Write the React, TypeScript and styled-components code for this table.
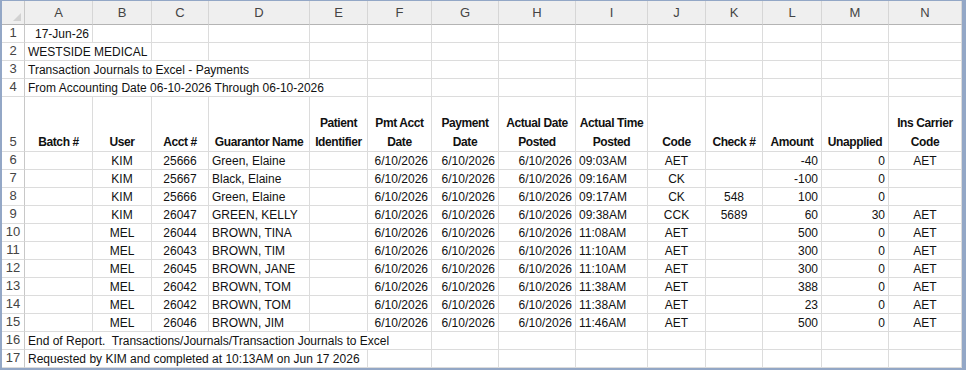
import React from "react";
import styled, { createGlobalStyle } from "styled-components";

const GlobalStyle = createGlobalStyle`
  html, body {
    margin: 0;
    padding: 0;
    background: #ffffff;
  }
  body {
    font-family: "Liberation Sans", Arial, sans-serif;
  }
`;

const COLS = [23, 68, 59, 57, 101, 58, 64, 67, 77, 72, 58, 57, 59, 67, 73];
const LETTERS = ["A", "B", "C", "D", "E", "F", "G", "H", "I", "J", "K", "L", "M", "N"];

const Frame = styled.div`
  width: 966px;
  height: 370px;
  box-sizing: border-box;
  border-style: solid;
  border-color: #93a7c6;
  border-width: 1px 4px 2px 2px;
  overflow: hidden;
  background: #ffffff;
`;

const Sheet = styled.div`
  display: grid;
  grid-template-columns: ${COLS.map((c) => c + "px").join(" ")};
  grid-template-rows: 24px repeat(4, 18px) 55px repeat(12, 18px);
  font-size: 12px;
  color: #111;
`;

const Corner = styled.div`
  position: relative;
  background: #efefef;
  border-right: 1px solid #c8c8c8;
  border-bottom: 1px solid #b4b4b4;
  box-sizing: border-box;

  &::after {
    content: "";
    position: absolute;
    right: 3px;
    bottom: 3px;
    width: 0;
    height: 0;
    border-left: 8px solid transparent;
    border-bottom: 8px solid #d2d2d2;
  }
`;

const ColHead = styled.div`
  display: flex;
  align-items: center;
  justify-content: center;
  background: #efefef;
  border-right: 1px solid #d6d6d6;
  border-bottom: 1px solid #b4b4b4;
  box-sizing: border-box;
  font-size: 13px;
  color: #444;
`;

const RowNum = styled.div`
  display: flex;
  align-items: flex-end;
  justify-content: center;
  padding-bottom: 1px;
  background: #ffffff;
  border-right: 1px solid #c8c8c8;
  border-bottom: 1px solid #dcdcdc;
  box-sizing: border-box;
  font-size: 13px;
  line-height: 17px;
  color: #444;
`;

type Align = "left" | "center" | "right";

const Cell = styled.div<{ $align?: Align; $span?: number }>`
  grid-column: span ${(p) => p.$span ?? 1};
  display: flex;
  align-items: flex-end;
  justify-content: ${(p) =>
    p.$align === "right" ? "flex-end" : p.$align === "center" ? "center" : "flex-start"};
  padding: 0 3px 0 3px;
  border-right: 1px solid #dcdcdc;
  border-bottom: 1px solid #dcdcdc;
  box-sizing: border-box;
  white-space: pre;
  line-height: 16px;
  overflow: visible;
`;

const HeadCell = styled.div`
  display: flex;
  align-items: flex-end;
  justify-content: center;
  text-align: center;
  border-right: 1px solid #dcdcdc;
  border-bottom: 1px solid #dcdcdc;
  box-sizing: border-box;
  font-weight: 700;
  letter-spacing: -0.4px;
  line-height: 19px;
`;

const HeadLabel = styled.span`
  margin-bottom: -1px;
`;

const HEADERS = [
  "Batch #",
  "User",
  "Acct #",
  "Guarantor Name",
  "Patient Identifier",
  "Pmt Acct Date",
  "Payment Date",
  "Actual Date Posted",
  "Actual Time Posted",
  "Code",
  "Check #",
  "Amount",
  "Unapplied",
  "Ins Carrier Code",
];

const ALIGN: Align[] = [
  "left",
  "center",
  "center",
  "left",
  "left",
  "right",
  "right",
  "right",
  "left",
  "center",
  "center",
  "right",
  "right",
  "center",
];

const rows: string[][] = [
  ["", "KIM", "25666", "Green, Elaine", "", "6/10/2026", "6/10/2026", "6/10/2026", "09:03AM", "AET", "", "-40", "0", "AET"],
  ["", "KIM", "25667", "Black, Elaine", "", "6/10/2026", "6/10/2026", "6/10/2026", "09:16AM", "CK", "", "-100", "0", ""],
  ["", "KIM", "25666", "Green, Elaine", "", "6/10/2026", "6/10/2026", "6/10/2026", "09:17AM", "CK", "548", "100", "0", ""],
  ["", "KIM", "26047", "GREEN, KELLY", "", "6/10/2026", "6/10/2026", "6/10/2026", "09:38AM", "CCK", "5689", "60", "30", "AET"],
  ["", "MEL", "26044", "BROWN, TINA", "", "6/10/2026", "6/10/2026", "6/10/2026", "11:08AM", "AET", "", "500", "0", "AET"],
  ["", "MEL", "26043", "BROWN, TIM", "", "6/10/2026", "6/10/2026", "6/10/2026", "11:10AM", "AET", "", "300", "0", "AET"],
  ["", "MEL", "26045", "BROWN, JANE", "", "6/10/2026", "6/10/2026", "6/10/2026", "11:10AM", "AET", "", "300", "0", "AET"],
  ["", "MEL", "26042", "BROWN, TOM", "", "6/10/2026", "6/10/2026", "6/10/2026", "11:38AM", "AET", "", "388", "0", "AET"],
  ["", "MEL", "26042", "BROWN, TOM", "", "6/10/2026", "6/10/2026", "6/10/2026", "11:38AM", "AET", "", "23", "0", "AET"],
  ["", "MEL", "26046", "BROWN, JIM", "", "6/10/2026", "6/10/2026", "6/10/2026", "11:46AM", "AET", "", "500", "0", "AET"],
];

// a text row that runs over the first `span` columns, then empty cells
function TextRow({ n, text, span, align }: { n: number; text: string; span: number; align?: Align }) {
  return (
    <>
      <RowNum>{n}</RowNum>
      <Cell $span={span} $align={align}>
        {text}
      </Cell>
      {Array.from({ length: 14 - span }).map((_, i) => (
        <Cell key={i} />
      ))}
    </>
  );
}

function App() {
  return (
    <>
      <GlobalStyle />
      <Frame>
        <Sheet>
          <Corner />
          {LETTERS.map((l) => (
            <ColHead key={l}>{l}</ColHead>
          ))}

          <TextRow n={1} text="17-Jun-26" span={1} align="right" />
          <TextRow n={2} text="WESTSIDE MEDICAL" span={2} />
          <TextRow n={3} text="Transaction Journals to Excel - Payments" span={4} />
          <TextRow n={4} text="From Accounting Date 06-10-2026 Through 06-10-2026" span={5} />

          <RowNum>5</RowNum>
          {HEADERS.map((h) => (
            <HeadCell key={h}>
              <HeadLabel>{h}</HeadLabel>
            </HeadCell>
          ))}

          {rows.map((r, i) => (
            <React.Fragment key={i}>
              <RowNum>{i + 6}</RowNum>
              {r.map((v, j) => (
                <Cell key={j} $align={ALIGN[j]}>
                  {v}
                </Cell>
              ))}
            </React.Fragment>
          ))}

          <TextRow n={16} text="End of Report.  Transactions/Journals/Transaction Journals to Excel" span={6} />
          <TextRow n={17} text="Requested by KIM and completed at 10:13AM on Jun 17 2026" span={5} />
        </Sheet>
      </Frame>
    </>
  );
}

export default App;
